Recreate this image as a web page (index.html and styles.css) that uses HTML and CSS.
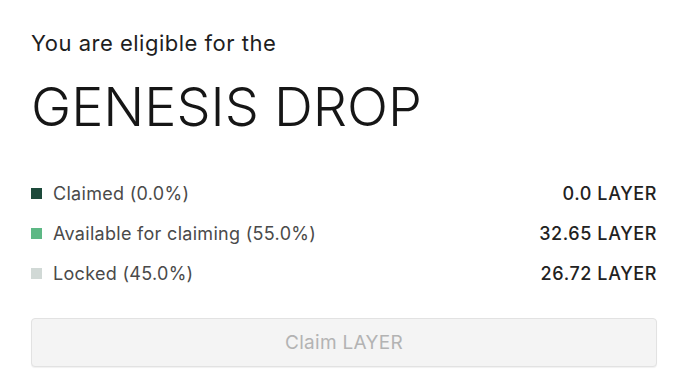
FILE: index.html
```html
<!DOCTYPE html>
<html lang="en">
<head>
    <meta charset="UTF-8">
    <meta name="viewport" content="width=device-width, initial-scale=1.0">
    <title>Genesis Drop</title>
    <link rel="stylesheet" href="styles.css">
</head>
<body>
    <div class="drop-card">
        <p class="eyebrow">You are eligible for the</p>
        <h1 class="title">GENESIS DROP</h1>

        <div class="allocation">
            <div class="row">
                <div class="label"><span class="swatch claimed"></span>Claimed (0.0%)</div>
                <div class="amount">0.0 LAYER</div>
            </div>
            <div class="row">
                <div class="label"><span class="swatch available"></span>Available for claiming (55.0%)</div>
                <div class="amount">32.65 LAYER</div>
            </div>
            <div class="row">
                <div class="label"><span class="swatch locked"></span>Locked (45.0%)</div>
                <div class="amount">26.72 LAYER</div>
            </div>
        </div>

        <button class="claim-btn" disabled>Claim LAYER</button>
    </div>
</body>
</html>
```

FILE: styles.css
```css
body {
    margin: 0;
    background-color: #ffffff;
    font-family: Inter, "Liberation Sans", sans-serif;
    color: #1a1a1a;
}

.drop-card {
    padding: 31px 25px 14px 31px;
}

.eyebrow {
    margin: 0;
    font-size: 22px;
    line-height: 24px;
    letter-spacing: 0.5px;
    color: #1e1e1e;
}

.title {
    margin: 20px 0 0;
    font-size: 54px;
    line-height: 64px;
    font-weight: 300;
    color: #161616;
}

.allocation {
    margin-top: 34px;
}

.row {
    display: flex;
    justify-content: space-between;
    align-items: center;
    height: 40px;
    font-size: 18px;
    letter-spacing: 0.3px;
}

.label {
    display: flex;
    align-items: center;
    gap: 11px;
    color: #4a4a4a;
}

.swatch {
    width: 11px;
    height: 11px;
}

.swatch.claimed {
    background-color: #1d4a3b;
}

.swatch.available {
    background-color: #5db885;
}

.swatch.locked {
    background-color: #d1d9d6;
}

.amount {
    font-size: 18px;
    font-weight: 500;
    letter-spacing: 0.6px;
    color: #222222;
}

.claim-btn {
    display: block;
    width: 100%;
    height: 49px;
    margin-top: 25px;
    background-color: #f4f4f4;
    border: 1px solid #e2e2e2;
    border-radius: 4px;
    box-shadow: 0 1px 1px rgba(0, 0, 0, 0.06);
    font-family: inherit;
    font-size: 19px;
    letter-spacing: 0.3px;
    color: #b3b3b3;
}
```
